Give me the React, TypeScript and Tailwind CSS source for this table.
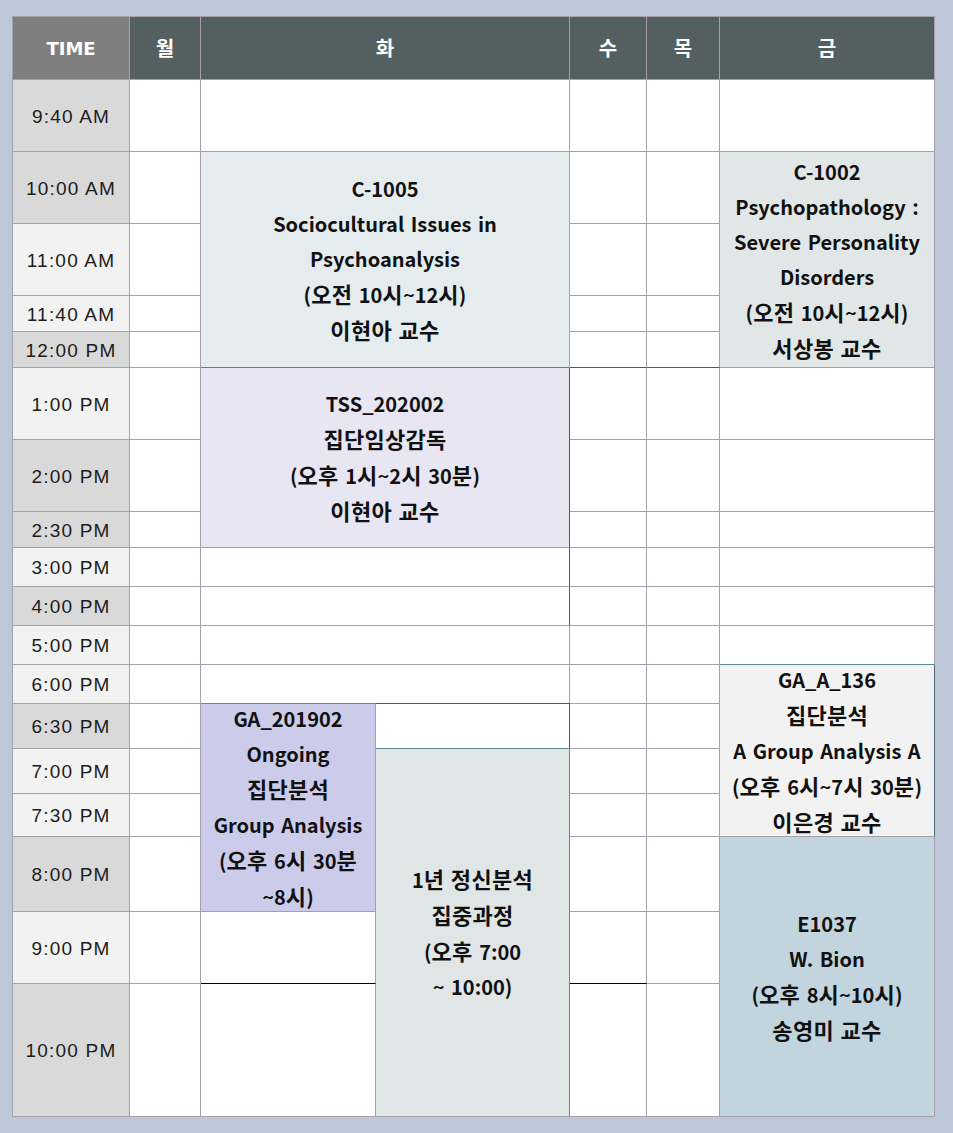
const ROW = [
  "",
  "row-start-1",
  "row-start-2",
  "row-start-3",
  "row-start-4",
  "row-start-5",
  "row-start-6",
  "row-start-7",
  "row-start-8",
  "row-start-9",
  "row-start-10",
  "row-start-11",
  "row-start-12",
  "row-start-13",
  "row-start-14",
  "row-start-15",
  "row-start-16",
  "row-start-17",
  "row-start-18",
  "row-start-19",
];

const times: { label: string; bg: string }[] = [
  { label: "9:40 AM", bg: "bg-[#d9d9d9]" },
  { label: "10:00 AM", bg: "bg-[#d9d9d9]" },
  { label: "11:00 AM", bg: "bg-[#f2f2f2]" },
  { label: "11:40 AM", bg: "bg-[#f2f2f2]" },
  { label: "12:00 PM", bg: "bg-[#d9d9d9]" },
  { label: "1:00 PM", bg: "bg-[#f2f2f2]" },
  { label: "2:00 PM", bg: "bg-[#d9d9d9]" },
  { label: "2:30 PM", bg: "bg-[#d9d9d9]" },
  { label: "3:00 PM", bg: "bg-[#f2f2f2]" },
  { label: "4:00 PM", bg: "bg-[#d9d9d9]" },
  { label: "5:00 PM", bg: "bg-[#f2f2f2]" },
  { label: "6:00 PM", bg: "bg-[#f2f2f2]" },
  { label: "6:30 PM", bg: "bg-[#d9d9d9]" },
  { label: "7:00 PM", bg: "bg-[#f2f2f2]" },
  { label: "7:30 PM", bg: "bg-[#f2f2f2]" },
  { label: "8:00 PM", bg: "bg-[#d9d9d9]" },
  { label: "9:00 PM", bg: "bg-[#f2f2f2]" },
  { label: "10:00 PM", bg: "bg-[#d9d9d9]" },
];

// 수 / 목 borders: a darker box around the early afternoon rows
function wedBorder(row: number) {
  if (row === 6) return "border-b-[#4f5b5b]";
  if (row >= 7 && row <= 10) return "border-[#4f5b5b]";
  if (row === 18) return "border-b-black";
  return "";
}

function thuBorder(row: number) {
  if (row === 6) return "border-b-[#4f5b5b]";
  if (row >= 7 && row <= 9) return "border-[#4f5b5b]";
  return "";
}

type Course = { cls: string; lines: string[] };

const courses: Course[] = [
  {
    cls: "col-start-3 col-span-2 row-start-3 row-span-4 bg-[#e4ecee] border-b-[#5b7f86] border-r-[#a79fab]",
    lines: ["C-1005", "Sociocultural Issues in", "Psychoanalysis", "(오전 10시~12시)", "이현아 교수"],
  },
  {
    cls: "col-start-3 col-span-2 row-start-7 row-span-3 bg-[#e8e6f2] border-r-[#4f5b5b]",
    lines: ["TSS_202002", "집단임상감독", "(오후 1시~2시 30분)", "이현아 교수"],
  },
  {
    cls: "col-start-3 row-start-14 row-span-4 bg-[#ccccea] border-[#5e8c93]",
    lines: ["GA_201902", "Ongoing", "집단분석", "Group Analysis", "(오후 6시 30분", "~8시)"],
  },
  {
    cls: "col-start-4 row-start-15 row-span-5 bg-[#e0e6e6] border-r-[#5e8c93]",
    lines: ["1년 정신분석", "집중과정", "(오후 7:00", "~ 10:00)"],
  },
  {
    cls: "col-start-7 row-start-3 row-span-4 bg-[#e1e7e7]",
    lines: ["C-1002", "Psychopathology :", "Severe Personality", "Disorders", "(오전 10시~12시)", "서상봉 교수"],
  },
  {
    cls: "col-start-7 row-start-13 row-span-4 bg-[#f2f2f2] border-r-[#4f6c70] border-b-[#a79fab]",
    lines: ["GA_A_136", "집단분석", "A Group Analysis A", "(오후 6시~7시 30분)", "이은경 교수"],
  },
  {
    cls: "col-start-7 row-start-17 row-span-3 bg-[#c2d4de]",
    lines: ["E1037", "W. Bion", "(오후 8시~10시)", "송영미 교수"],
  },
];

const cell = "border-r border-b border-[#a79fab]";
const courseFont = "font-['Noto_Sans_CJK_KR',sans-serif] font-bold text-[20px] leading-[35px] text-[#111] [word-spacing:2px]";

// Hangul runs get a slightly larger size, closer to the wide Korean face of the original
function Line({ text }: { text: string }) {
  const parts = text.split(/([\uAC00-\uD7A3]+)/);
  return (
    <div className="whitespace-nowrap">
      {parts.map((p, i) =>
        /[\uAC00-\uD7A3]/.test(p) ? (
          <span key={i} className="text-[22px] tracking-[0.3px]">
            {p}
          </span>
        ) : (
          <span key={i}>{p}</span>
        )
      )}
    </div>
  );
}

export default function App() {
  return (
    <div className="min-h-screen w-full bg-[#bec7d8] pt-[16px] pl-[12px] pb-[16px]">
      <div className="grid w-fit grid-cols-[117px_71px_175px_194px_77px_73px_215px] grid-rows-[63px_72px_72px_72px_36px_36px_72px_72px_36px_39px_39px_39px_39px_45px_45px_43px_75px_72px_133px] border-t border-l border-[#a79fab] bg-white">
        {/* header */}
        <div className={`${cell} col-start-1 row-start-1 bg-[#7f7f7f] flex items-center justify-center font-['DejaVu_Sans',sans-serif] font-bold text-[18px] text-white`}>
          TIME
        </div>
        {[
          { t: "월", c: "col-start-2" },
          { t: "화", c: "col-start-3 col-span-2" },
          { t: "수", c: "col-start-5" },
          { t: "목", c: "col-start-6" },
          { t: "금", c: "col-start-7" },
        ].map((h) => (
          <div
            key={h.t}
            className={`${cell} ${h.c} row-start-1 bg-[#546060] flex items-center justify-center font-['Noto_Sans_CJK_KR',sans-serif] font-bold text-[20px] text-white`}
          >
            {h.t}
          </div>
        ))}

        {/* time column */}
        {times.map((t, i) => (
          <div
            key={t.label}
            className={`${cell} col-start-1 ${ROW[i + 2]} ${t.bg} flex items-center justify-center pt-[3px] font-['Liberation_Sans',sans-serif] text-[19px] tracking-[1.2px] text-[#1c1c1c]`}
          >
            {t.label}
          </div>
        ))}

        {/* 월, 수, 목 empty cells */}
        {times.map((t, i) => (
          <div key={"mon" + t.label} className={`${cell} col-start-2 ${ROW[i + 2]}`} />
        ))}
        {times.map((t, i) => (
          <div key={"wed" + t.label} className={`${cell} col-start-5 ${ROW[i + 2]} ${wedBorder(i + 2)}`} />
        ))}
        {times.map((t, i) => (
          <div key={"thu" + t.label} className={`${cell} col-start-6 ${ROW[i + 2]} ${thuBorder(i + 2)}`} />
        ))}

        {/* 화 empty cells */}
        <div className={`${cell} col-start-3 col-span-2 row-start-2`} />
        <div className={`${cell} col-start-3 col-span-2 row-start-10 border-r-[#4f5b5b]`} />
        <div className={`${cell} col-start-3 col-span-2 row-start-11 border-r-[#4f5b5b]`} />
        <div className={`${cell} col-start-3 col-span-2 row-start-12`} />
        <div className={`${cell} col-start-3 col-span-2 row-start-13 border-b-[#5e8c93]`} />
        <div className={`${cell} col-start-4 row-start-14 border-r-[#4f5b5b] border-b-[#5e8c93] border-t border-t-[#555] -mt-px`} />
        <div className={`${cell} col-start-3 row-start-18 border-b-black`} />
        <div className={`${cell} col-start-3 row-start-19`} />

        {/* 금 empty cells */}
        <div className={`${cell} col-start-7 row-start-2`} />
        <div className={`${cell} col-start-7 row-start-7`} />
        <div className={`${cell} col-start-7 row-start-8`} />
        <div className={`${cell} col-start-7 row-start-9`} />
        <div className={`${cell} col-start-7 row-start-10`} />
        <div className={`${cell} col-start-7 row-start-11`} />
        <div className={`${cell} col-start-7 row-start-12 border-b-[#5e8c93]`} />

        {/* courses */}
        {courses.map((c) => (
          <div
            key={c.lines[0]}
            className={`${cell} ${c.cls} flex flex-col items-center justify-center text-center ${courseFont}`}
          >
            {c.lines.map((l) => (
              <Line key={l} text={l} />
            ))}
          </div>
        ))}
      </div>
    </div>
  );
}
